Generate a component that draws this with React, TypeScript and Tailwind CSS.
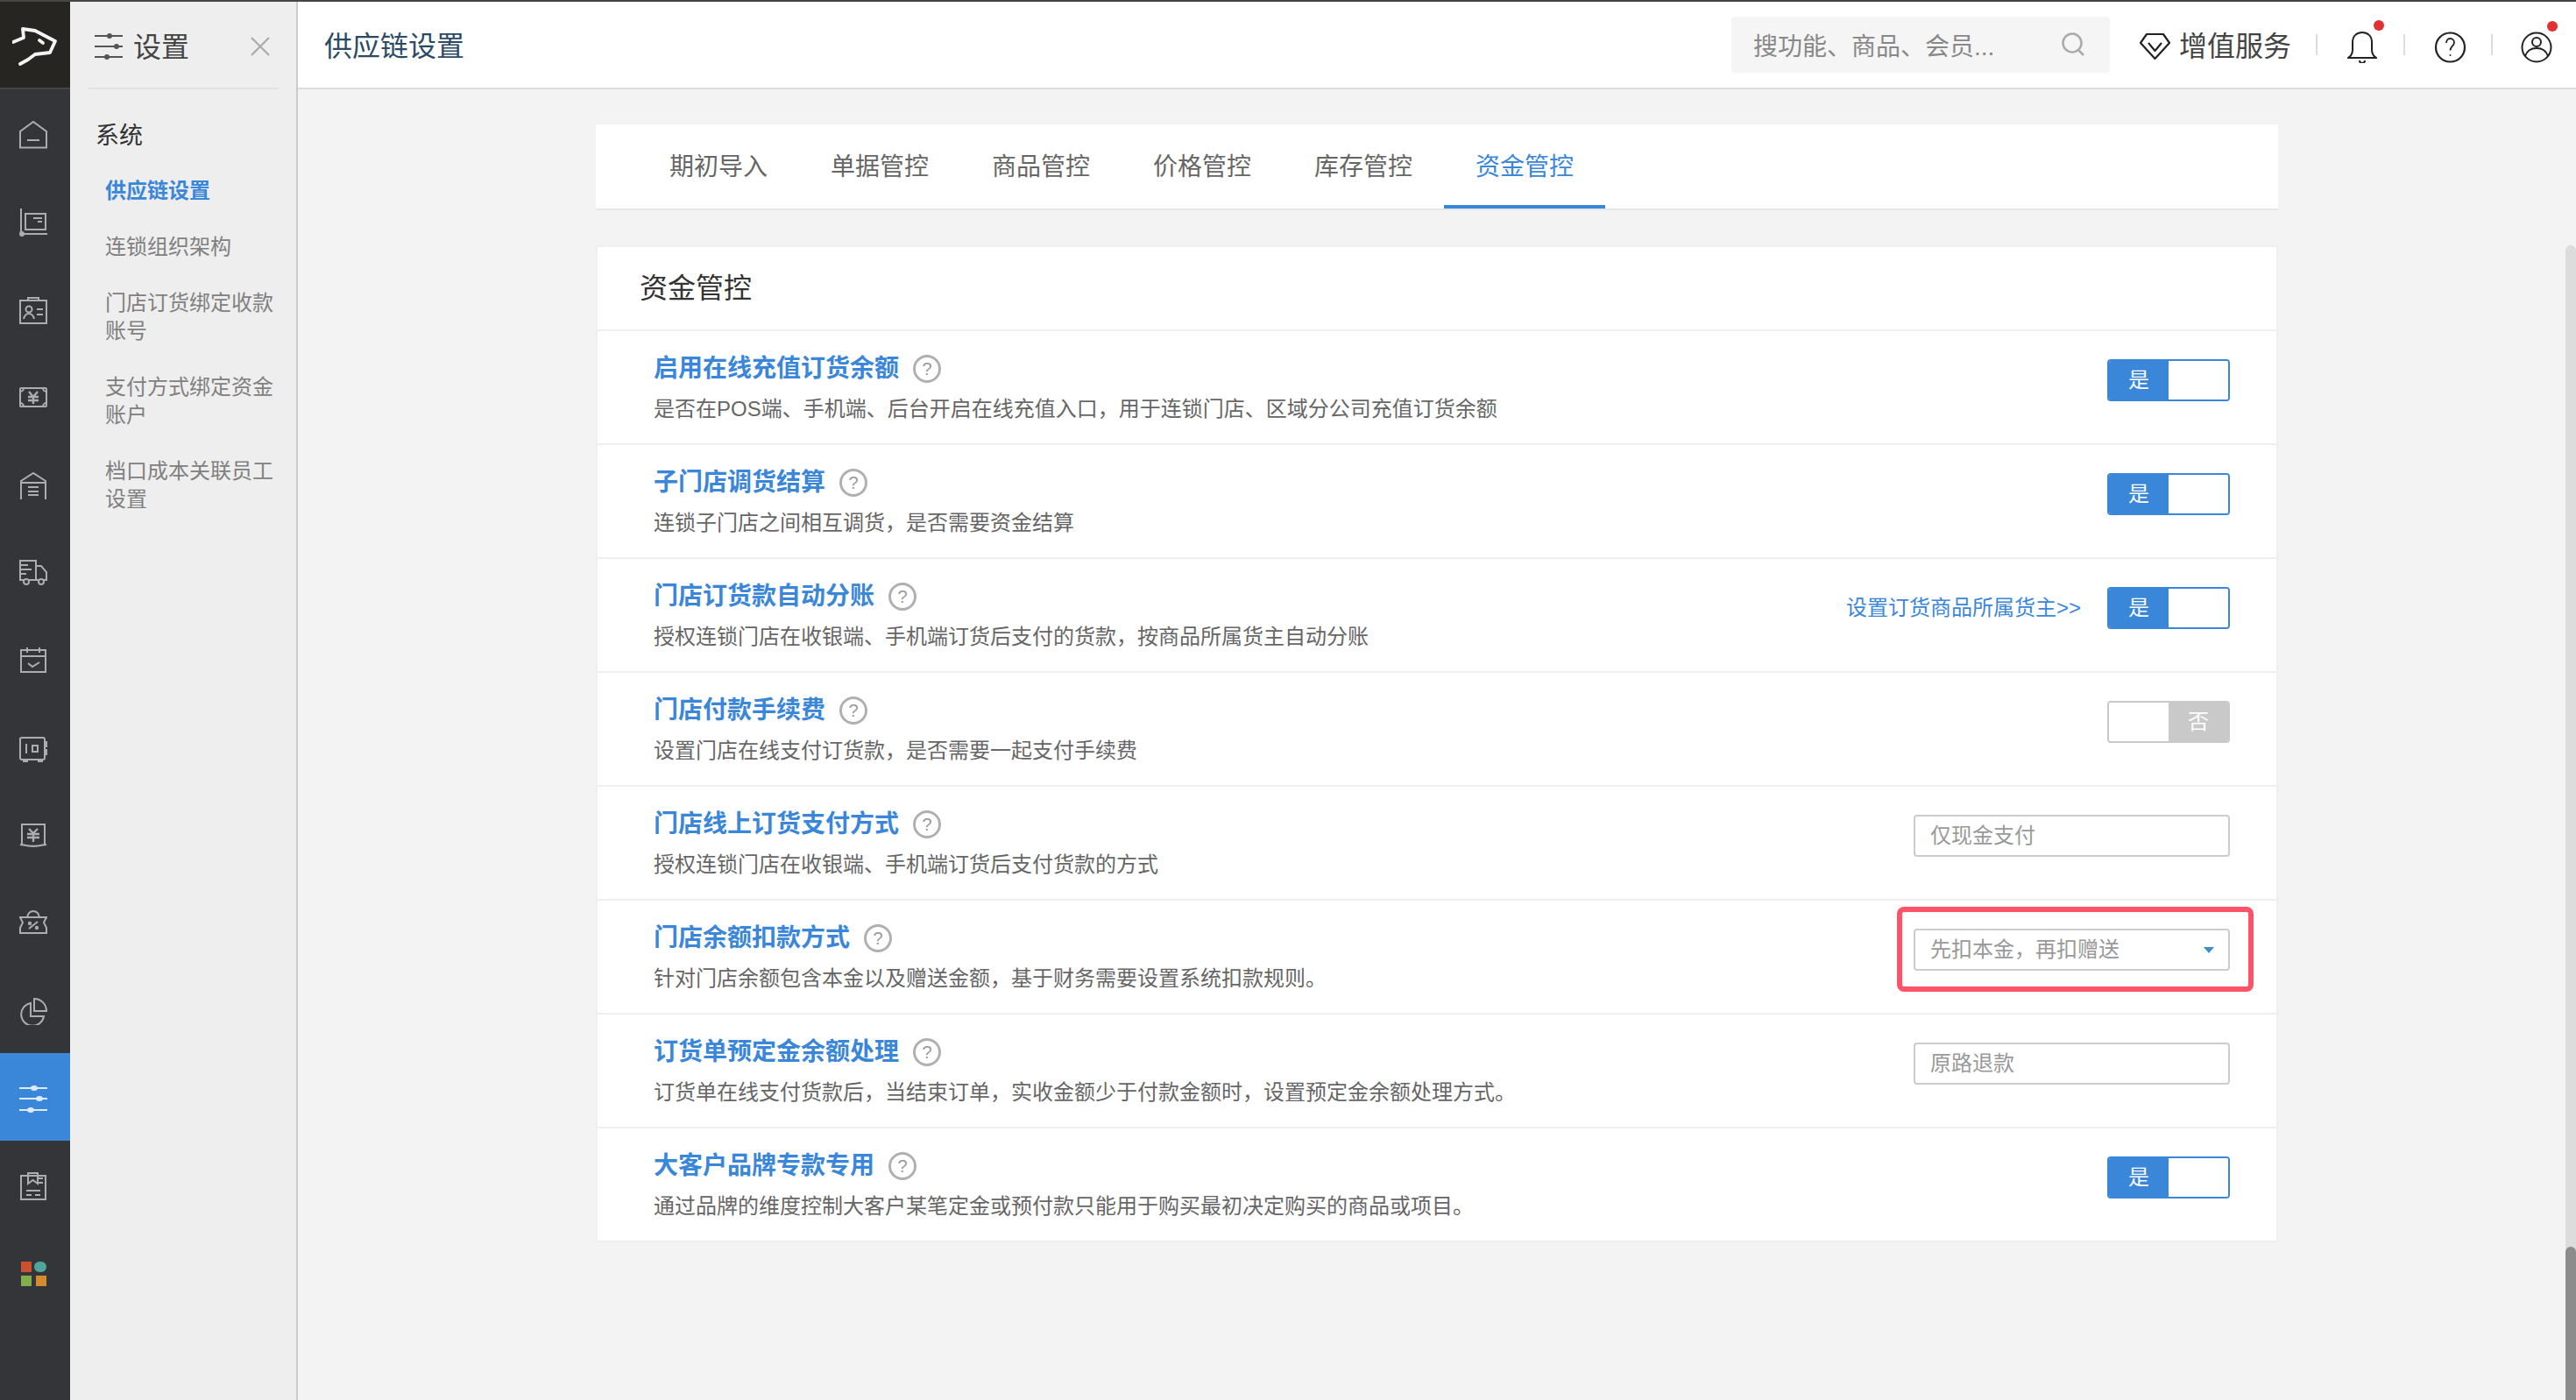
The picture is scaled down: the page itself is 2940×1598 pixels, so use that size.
import type { ReactNode } from 'react';

const railIcons: ReactNode[] = [
  // home
  <><path d="M1 30.5V12L16 1l15 11v18.5z" /><path d="M9 22h14" /></>,
  // cart board
  <><path d="M2 0v29h30" /><rect x="7" y="6" width="23" height="18" /><path d="M16 11h10M21 15h5" /><circle cx="3" cy="29" r="2" /></>,
  // id card
  <><rect x="1" y="5" width="30" height="26" /><path d="M10 5V2h12v3" /><circle cx="11" cy="15" r="3.5" /><path d="M5 26c1-4 3-6 6-6s5 2 6 6M20 15h7M20 21h7" /></>,
  // money
  <><rect x="1" y="5" width="30" height="21" rx="1" /><path d="M1 9a4 4 0 0 0 4-4M27 5a4 4 0 0 0 4 4M1 22a4 4 0 0 1 4 4M27 26a4 4 0 0 1 4-4" /><path d="M11 9l5 6 5-6M10 15h12M10 19h12M16 15v8" strokeWidth="2.4" /></>,
  // warehouse
  <><path d="M2 32V11L16 2l14 9v21" /><path d="M2 13h28" /><path d="M10 18h12M10 23h12M10 27h12" /></>,
  // truck
  <><path d="M6 24H1V2h18v22H10" /><path d="M19 8h6l6 7v9h-3M19 24h3" /><circle cx="8" cy="26" r="3" /><circle cx="25" cy="26" r="3" /><path d="M1 7h9M1 12h13M1 17h7" /></>,
  // calendar
  <><rect x="2" y="4" width="28" height="25" /><path d="M9 1v6M23 1v6M2 11h28M10 19l5 4 8-5" /></>,
  // safe
  <><rect x="1" y="4" width="28" height="25" rx="2" /><path d="M29 9h2v5h-2M29 18h2v5h-2M8 11v11M15 13h6v7h-6zM5 29v2h4v-2M22 29v2h4v-2" /></>,
  // book yuan
  <><path d="M3 3h26v23l-2 .5c-8 2-14 2-22 0L3 26zM1 26l3 .5M31 26l-3 .5" /><path d="M11 8l5 5 5-5M9 14h14M9 18h14M16 13v10" strokeWidth="2.4" /></>,
  // coupon
  <><path d="M1 9h30l-3 6 3 6v6H1v-6l3-6-3-6z" /><path d="M9 9c1-5 4-7 7-7s6 2 7 7" /><path d="M11 22l10-8" /><circle cx="12" cy="16" r="1.2" /><circle cx="20" cy="21" r="1.2" /></>,
  // pie
  <><path d="M13 7a13 13 0 1 0 15 15H13z" /><path d="M17 2a14 14 0 0 1 14 14H17z" /></>,
  // sliders
  <><path d="M0 4h32M0 16h32M0 29h32" /><ellipse cx="17" cy="4" rx="3" ry="2" /><ellipse cx="23" cy="16" rx="3" ry="2" /><ellipse cx="13" cy="29" rx="3" ry="2" /></>,
  // booklet
  <><path d="M2 4h28v27H2z" /><path d="M10 4V1h11v12l-5.500-4-5.500 4zM21 7h6M21 12h6M8 21h16M8 26h6M18 26h6" /></>,
];

function RailIcon({ children, active }: { children: ReactNode; active?: boolean }) {
  return (
    <div className={`flex h-[100px] items-center justify-center pr-1 pt-1 ${active ? 'bg-[#3a86d8]' : ''}`}>
      <svg
        viewBox="0 0 32 32"
        fill="none"
        stroke={active ? '#dcebfb' : '#acaeae'}
        strokeWidth="2"
        className="h-8 w-8"
      >
        {children}
      </svg>
    </div>
  );
}

function Rail() {
  return (
    <div className="flex w-20 shrink-0 flex-col bg-[#333538]">
      <div className="flex h-[100px] items-center justify-center border-b-2 border-[#43454a] bg-[#262522]">
        <svg viewBox="0 0 52 48" fill="none" stroke="#f4f4f4" strokeWidth="3.800" strokeLinejoin="round" strokeLinecap="round" className="h-12 w-[52px]">
          <path d="M1 21l12-5-1-10 14 2 23 12-6 13-17 2-8 6-9 5" />
          <path d="M31 19l4 3" />
        </svg>
      </div>
      {railIcons.map((icon, i) => (
        <RailIcon key={i} active={i === 11}>
          {icon}
        </RailIcon>
      ))}
      <div className="flex h-[100px] items-center justify-center pr-1 pt-1">
        <div className="grid grid-cols-[12px_14px] grid-rows-[12px_12px] gap-x-[3px] gap-y-1">
          <div className="bg-[#c8522f]" />
          <div className="rounded-full bg-[#4fa59b]" />
          <div className="bg-[#83ae4c]" />
          <div className="w-3 justify-self-end bg-[#d48b2d]" />
        </div>
      </div>
    </div>
  );
}

const subNav = ['供应链设置', '连锁组织架构', '门店订货绑定收款账号', '支付方式绑定资金账户', '档口成本关联员工设置'];

function Sidebar() {
  return (
    <div className="w-[260px] shrink-0 border-r-2 border-[#cccccc] bg-[#eeeeee]">
      <div className="mx-5 flex h-[100px] items-center border-b-2 border-[#e2e2e2]">
        <svg viewBox="0 0 32 30" fill="none" stroke="#555555" strokeWidth="2" className="ml-2 mt-1 h-[30px] w-8">
          <path d="M0 3h32M0 15h32M0 27h32" />
          <circle cx="17" cy="3" r="2" />
          <circle cx="25" cy="15" r="2" />
          <circle cx="14" cy="27" r="2" />
        </svg>
        <span className="ml-3 pt-[6px] text-[32px] leading-10 text-[#444444]">设置</span>
        <svg viewBox="0 0 22 22" fill="none" stroke="#aaaaaa" strokeWidth="2.200" className="ml-[70px] mt-1 h-[22px] w-[22px]">
          <path d="M1 1l20 20M21 1L1 21" />
        </svg>
      </div>
      <div className="mt-[35px] pl-[29px] text-[27px] leading-9 text-[#333333]">系统</div>
      <div className="mt-[29px] flex flex-col gap-8 pl-10 pr-[24px] text-2xl leading-8 text-[#808080]">
        {subNav.map((label, i) => (
          <div key={label} className={i === 0 ? 'font-bold text-[#3a86d8]' : ''}>
            {label}
          </div>
        ))}
      </div>
    </div>
  );
}

function Header() {
  return (
    <div className="flex h-[100px] items-center border-b-2 border-[#dddddd] bg-white">
      <div className="pl-[30px] pt-1 text-[32px] leading-10 text-[#2c4a64]">供应链设置</div>
      <div className="ml-[1446px] flex h-16 w-[432px] items-center justify-between rounded bg-[#f5f5f5] pl-[25px] pr-7">
        <span className="pt-[6px] text-[28px] leading-9 text-[#888888]">搜功能、商品、会员...</span>
        <svg viewBox="0 0 28 28" fill="none" stroke="#aaaaaa" strokeWidth="2.500" className="h-7 w-7">
          <circle cx="13" cy="12" r="10.500" />
          <path d="M20 20l6 6" />
        </svg>
      </div>
      <svg viewBox="0 0 37 32" fill="none" stroke="#222222" strokeWidth="2.200" strokeLinejoin="round" className="ml-[33px] mt-[3px] h-8 w-[37px]">
        <path d="M9 2h19l7 10-16.500 18L2 12z" />
        <path d="M11 12l7.500 9 7.500-9" />
      </svg>
      <span className="ml-[9px] pt-1 text-[32px] leading-10 text-[#444444]">增值服务</span>
      <div className="ml-[28px] h-6 w-0.5 bg-[#dddddd]" />
      <div className="relative ml-[34px] mt-[6px] h-9 w-[34px]">
        <svg viewBox="0 0 34 36" fill="none" stroke="#222222" strokeWidth="2" className="h-9 w-[34px]">
          <path d="M1 30c3-2 5-5 5-9V12C6 5 11 1 17 1s11 4 11 11v9c0 4 2 7 5 9z" />
          <path d="M14 33c0 2 1.500 3 3 3s3-1 3-3" />
        </svg>
        <div className="absolute -top-[13px] -right-[8px] h-3 w-3 rounded-full bg-[#e03030]" />
      </div>
      <div className="ml-[30px] h-6 w-0.5 bg-[#dddddd]" />
      <svg viewBox="0 0 37 36" fill="none" stroke="#222222" strokeWidth="2.200" className="ml-[33px] mt-[6px] h-9 w-[37px]">
        <circle cx="18.500" cy="18" r="16.500" />
        <path d="M14 13c0-3 2-5 4.500-5s4.500 2 4.500 4.500c0 4-4.500 4.500-4.500 9" strokeWidth="1.800" />
        <circle cx="18.500" cy="27" r="1" fill="#222222" stroke="none" />
      </svg>
      <div className="ml-[28px] h-6 w-0.5 bg-[#dddddd]" />
      <div className="relative ml-[32px] mt-[6px] h-9 w-9">
        <svg viewBox="0 0 36 36" fill="none" stroke="#222222" strokeWidth="2" className="h-9 w-9">
          <circle cx="18" cy="18" r="16.500" />
          <circle cx="18" cy="12" r="5" />
          <path d="M5 28c2-6 7-9 13-9s11 3 13 9" />
        </svg>
        <div className="absolute -top-[12px] -right-[6px] h-3 w-3 rounded-full bg-[#e03030]" />
      </div>
    </div>
  );
}

function Toggle({ on }: { on: boolean }) {
  if (on) {
    return (
      <div className="flex h-12 w-[140px] overflow-hidden rounded border-2 border-[#3a86d8]">
        <div className="flex w-[68px] items-center justify-center bg-[#3a86d8] text-2xl leading-8 text-white">是</div>
        <div className="flex-1 bg-white" />
      </div>
    );
  }
  return (
    <div className="flex h-12 w-[140px] overflow-hidden rounded border-2 border-[#c9c9c9]">
      <div className="flex-1 bg-white" />
      <div className="flex w-[68px] items-center justify-center bg-[#c9c9c9] text-2xl leading-8 text-white">否</div>
    </div>
  );
}

function FieldBox({ text, caret }: { text: string; caret?: boolean }) {
  return (
    <div className="flex h-12 w-[361px] items-center justify-between rounded border-2 border-[#cccccc] bg-white pl-[17px] pr-4">
      <span className="text-2xl leading-8 text-[#999999]">{text}</span>
      {caret && <div className="h-0 w-0 border-x-[6px] border-t-[7px] border-x-transparent border-t-[#3a8fc8]" />}
    </div>
  );
}

function HelpMark() {
  return (
    <div className="flex h-8 w-8 items-center justify-center rounded-full border-[3px] border-[#b0b0b0] text-[20px] leading-none text-[#999999]">?</div>
  );
}

const rows: { title: string; desc: string; control: ReactNode }[] = [
  {
    title: '启用在线充值订货余额',
    desc: '是否在POS端、手机端、后台开启在线充值入口，用于连锁门店、区域分公司充值订货余额',
    control: <Toggle on />,
  },
  {
    title: '子门店调货结算',
    desc: '连锁子门店之间相互调货，是否需要资金结算',
    control: <Toggle on />,
  },
  {
    title: '门店订货款自动分账',
    desc: '授权连锁门店在收银端、手机端订货后支付的货款，按商品所属货主自动分账',
    control: (
      <div className="flex items-center gap-[30px]">
        <span className="text-2xl leading-8 text-[#3a86d8]">设置订货商品所属货主&gt;&gt;</span>
        <Toggle on />
      </div>
    ),
  },
  {
    title: '门店付款手续费',
    desc: '设置门店在线支付订货款，是否需要一起支付手续费',
    control: <Toggle on={false} />,
  },
  {
    title: '门店线上订货支付方式',
    desc: '授权连锁门店在收银端、手机端订货后支付货款的方式',
    control: <FieldBox text="仅现金支付" />,
  },
  {
    title: '门店余额扣款方式',
    desc: '针对门店余额包含本金以及赠送金额，基于财务需要设置系统扣款规则。',
    control: (
      <div className="relative">
        <FieldBox text="先扣本金，再扣赠送" caret />
        <div className="absolute -bottom-6 -left-[19px] -right-[27px] -top-[25px] rounded-lg border-[6px] border-[#ff5468]" />
      </div>
    ),
  },
  {
    title: '订货单预定金余额处理',
    desc: '订货单在线支付货款后，当结束订单，实收金额少于付款金额时，设置预定金余额处理方式。',
    control: <FieldBox text="原路退款" />,
  },
  {
    title: '大客户品牌专款专用',
    desc: '通过品牌的维度控制大客户某笔定金或预付款只能用于购买最初决定购买的商品或项目。',
    control: <Toggle on />,
  },
];

const tabs = ['期初导入', '单据管控', '商品管控', '价格管控', '库存管控', '资金管控'];

function Content() {
  return (
    <div className="flex flex-1">
      <div className="flex-1 pl-[340px] pr-[328px] pt-10">
        <div className="flex h-[98px] border-b-2 border-[#e5e5e5] bg-white pl-12">
          {tabs.map((tab, i) => (
            <div
              key={tab}
              className={`flex w-[184px] items-center justify-center border-b-4 pt-[6px] text-[28px] leading-9 ${
                i === 5 ? 'border-[#3a86d8] text-[#3a86d8]' : 'border-transparent text-[#666666]'
              }`}
            >
              {tab}
            </div>
          ))}
        </div>
        <div className="mt-10 border-2 border-[#efefef] bg-white">
          <div className="flex h-[96px] items-center border-b-2 border-[#efefef] pl-12 text-[32px] leading-10 text-[#333333]">资金管控</div>
          {rows.map((row, i) => (
            <div
              key={row.title}
              className={`flex items-start justify-between pl-16 pr-[53px] pt-[23px] ${
                i < rows.length - 1 ? 'h-[130px] border-b-2 border-[#efefef]' : 'h-[128px]'
              }`}
            >
              <div>
                <div className="flex items-center gap-4">
                  <span className="text-[28px] font-bold leading-10 text-[#3a86d8]">{row.title}</span>
                  <HelpMark />
                </div>
                <div className="mt-[10px] text-2xl leading-8 text-[#666666]">{row.desc}</div>
              </div>
              <div className="mt-[9px]">{row.control}</div>
            </div>
          ))}
        </div>
      </div>
      <div className="mt-[178px] flex w-3 flex-col justify-end rounded-t-full bg-[#dcdcdc]">
        <div className="h-[175px] rounded-t-full bg-[#8c8c8c]" />
      </div>
    </div>
  );
}

export default function App() {
  return (
    <div className="flex h-[1598px] w-[2940px] flex-col overflow-hidden bg-[#f3f3f3] font-['Liberation_Sans','Noto_Sans_CJK_SC',sans-serif]">
      <div className="h-0.5 shrink-0 bg-[#454745]" />
      <div className="flex min-h-0 flex-1">
        <Rail />
        <Sidebar />
        <div className="flex min-w-0 flex-1 flex-col">
          <Header />
          <Content />
        </div>
      </div>
    </div>
  );
}
